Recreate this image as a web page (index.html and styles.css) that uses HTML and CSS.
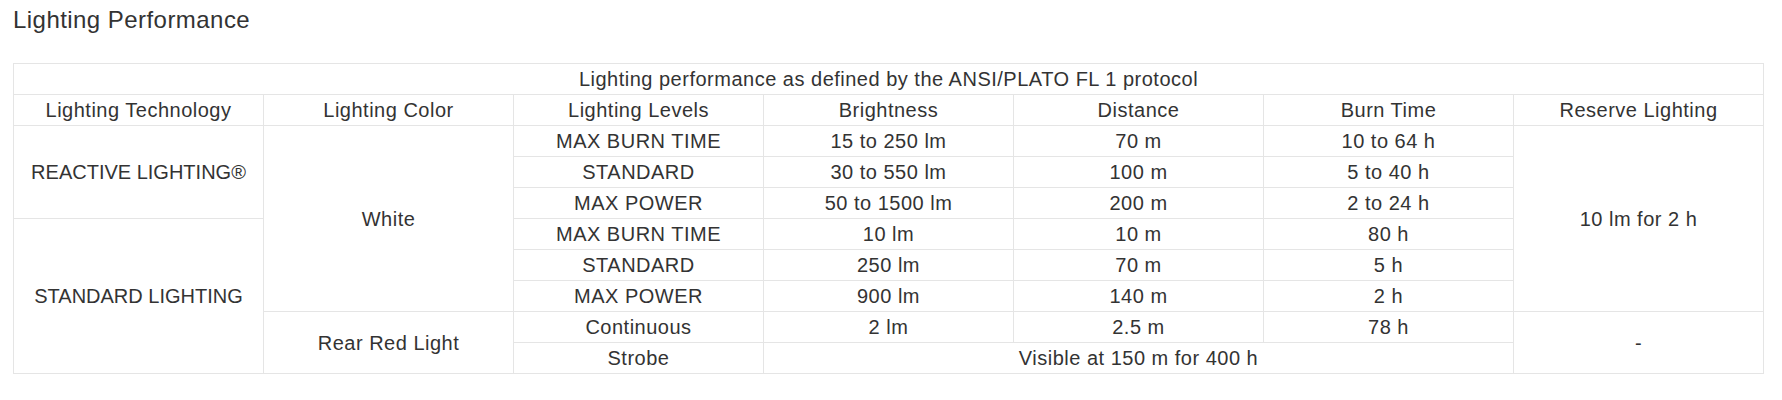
FILE: index.html
```html
<!DOCTYPE html>
<html lang="en">
<head>
<meta charset="utf-8">
<title>Lighting Performance</title>
<link rel="stylesheet" href="styles.css">
</head>
<body>
<section class="perf">
  <h2 class="perf-title">Lighting Performance</h2>
  <table class="perf-table">
    <thead>
      <tr><th class="cap" colspan="7">Lighting performance as defined by the ANSI/PLATO FL 1 protocol</th></tr>
      <tr>
        <th>Lighting Technology</th>
        <th>Lighting Color</th>
        <th>Lighting Levels</th>
        <th>Brightness</th>
        <th>Distance</th>
        <th>Burn Time</th>
        <th>Reserve Lighting</th>
      </tr>
    </thead>
    <tbody>
      <tr>
        <td rowspan="3" class="upper">REACTIVE LIGHTING®</td>
        <td rowspan="6">White</td>
        <td>MAX BURN TIME</td>
        <td>15 to 250 lm</td>
        <td>70 m</td>
        <td>10 to 64 h</td>
        <td rowspan="6">10 lm for 2 h</td>
      </tr>
      <tr>
        <td>STANDARD</td>
        <td>30 to 550 lm</td>
        <td>100 m</td>
        <td>5 to 40 h</td>
      </tr>
      <tr>
        <td>MAX POWER</td>
        <td>50 to 1500 lm</td>
        <td>200 m</td>
        <td>2 to 24 h</td>
      </tr>
      <tr>
        <td rowspan="5" class="upper">STANDARD LIGHTING</td>
        <td>MAX BURN TIME</td>
        <td>10 lm</td>
        <td>10 m</td>
        <td>80 h</td>
      </tr>
      <tr>
        <td>STANDARD</td>
        <td>250 lm</td>
        <td>70 m</td>
        <td>5 h</td>
      </tr>
      <tr>
        <td>MAX POWER</td>
        <td>900 lm</td>
        <td>140 m</td>
        <td>2 h</td>
      </tr>
      <tr>
        <td rowspan="2">Rear Red Light</td>
        <td>Continuous</td>
        <td>2 lm</td>
        <td>2.5 m</td>
        <td>78 h</td>
        <td rowspan="2">-</td>
      </tr>
      <tr>
        <td>Strobe</td>
        <td colspan="3">Visible at 150 m for 400 h</td>
      </tr>
    </tbody>
  </table>
</section>
</body>
</html>
```
FILE: styles.css
```css
html, body {
  margin: 0;
  padding: 0;
  background: #ffffff;
}

body {
  font-family: "Liberation Sans", Arial, sans-serif;
  color: #333333;
}

.perf {
  padding: 6px 13px 0 13px;
}

.perf-title {
  margin: 0;
  font-size: 24px;
  line-height: 28px;
  font-weight: normal;
  letter-spacing: 0.45px;
  color: #333333;
}

.perf-table {
  margin-top: 29px;
  width: 1751px;
  table-layout: fixed;
  border-collapse: collapse;
}

.perf-table th,
.perf-table td {
  border: 1px solid #e5e5e5;
  padding: 0;
  height: 30px;
  line-height: 30px;
  font-size: 20px;
  font-weight: normal;
  letter-spacing: 0.5px;
  text-align: center;
  vertical-align: middle;
  color: #333333;
}

.perf-table td.upper {
  letter-spacing: 0;
}
```
